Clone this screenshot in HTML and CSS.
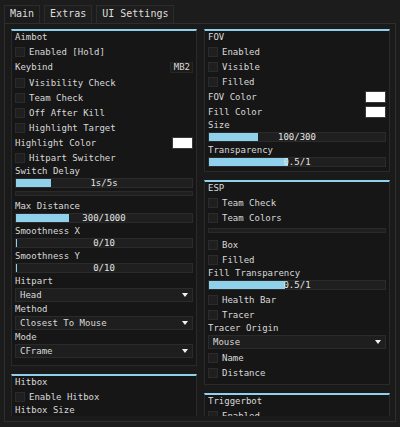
FILE: index.html
```html
<!DOCTYPE html>
<html>
<head>
<meta charset="utf-8">
<link rel="stylesheet" href="styles.css">
</head>
<body>
<div class="tabs">
  <div class="tab active">Main</div>
  <div class="tab">Extras</div>
  <div class="tab">UI Settings</div>
</div>
<div class="frame">
  <div class="col">
    <section class="box aimbot">
      <div class="title">Aimbot</div>
      <div class="check"><span class="cb"></span>Enabled [Hold]</div>
      <div class="row key-row"><span>Keybind</span><span class="key">MB2</span></div>
      <div class="check"><span class="cb"></span>Visibility Check</div>
      <div class="check"><span class="cb"></span>Team Check</div>
      <div class="check"><span class="cb"></span>Off After Kill</div>
      <div class="check"><span class="cb"></span>Highlight Target</div>
      <div class="row"><span>Highlight Color</span><span class="swatch"></span></div>
      <div class="check"><span class="cb"></span>Hitpart Switcher</div>
      <div class="label">Switch Delay</div>
      <div class="slider"><span class="fill" style="width:20%"></span><span class="val">1s/5s</span></div>
      <div class="strip"></div>
      <div class="label">Max Distance</div>
      <div class="slider"><span class="fill" style="width:30%"></span><span class="val">300/1000</span></div>
      <div class="label">Smoothness X</div>
      <div class="slider"><span class="fill" style="width:1px"></span><span class="val">0/10</span></div>
      <div class="label">Smoothness Y</div>
      <div class="slider"><span class="fill" style="width:1px"></span><span class="val">0/10</span></div>
      <div class="label">Hitpart</div>
      <div class="dd"><span>Head</span><span class="arrow"></span></div>
      <div class="label">Method</div>
      <div class="dd"><span>Closest To Mouse</span><span class="arrow"></span></div>
      <div class="label">Mode</div>
      <div class="dd"><span>CFrame</span><span class="arrow"></span></div>
    </section>
    <section class="box">
      <div class="title">Hitbox</div>
      <div class="check"><span class="cb"></span>Enable Hitbox</div>
      <div class="label">Hitbox Size</div>
    </section>
  </div>
  <div class="col">
    <section class="box">
      <div class="title">FOV</div>
      <div class="check"><span class="cb"></span>Enabled</div>
      <div class="check"><span class="cb"></span>Visible</div>
      <div class="check"><span class="cb"></span>Filled</div>
      <div class="row"><span>FOV Color</span><span class="swatch"></span></div>
      <div class="row"><span>Fill Color</span><span class="swatch"></span></div>
      <div class="label">Size</div>
      <div class="slider"><span class="fill" style="width:28%"></span><span class="val">100/300</span></div>
      <div class="label">Transparency</div>
      <div class="slider"><span class="fill" style="width:45%"></span><span class="val">0.5/1</span></div>
    </section>
    <section class="box">
      <div class="title">ESP</div>
      <div class="check"><span class="cb"></span>Team Check</div>
      <div class="check"><span class="cb"></span>Team Colors</div>
      <div class="strip"></div>
      <div class="check"><span class="cb"></span>Box</div>
      <div class="check"><span class="cb"></span>Filled</div>
      <div class="label">Fill Transparency</div>
      <div class="slider"><span class="fill" style="width:43%"></span><span class="val">0.5/1</span></div>
      <div class="check"><span class="cb"></span>Health Bar</div>
      <div class="check"><span class="cb"></span>Tracer</div>
      <div class="label">Tracer Origin</div>
      <div class="dd"><span>Mouse</span><span class="arrow"></span></div>
      <div class="check"><span class="cb"></span>Name</div>
      <div class="check"><span class="cb"></span>Distance</div>
    </section>
    <section class="box">
      <div class="title">Triggerbot</div>
      <div class="check"><span class="cb"></span>Enabled</div>
    </section>
  </div>
</div>
</body>
</html>
```
FILE: styles.css
```css
* { box-sizing: border-box; }
body {
  margin: 0;
  width: 400px;
  height: 427px;
  overflow: hidden;
  background: #1c1c1c;
  color: #d9d9d9;
  font-family: "DejaVu Sans Mono", "Liberation Mono", monospace;
  font-size: 9px;
}
.tabs {
  display: flex;
  gap: 4px;
  height: 23px;
  padding: 5px 0 0 4px;
}
.tab {
  height: 18px;
  padding: 0 5px;
  font-size: 10px;
  line-height: 16px;
  background: #1e1e1e;
  border: 1px solid #2c2c2c;
  border-bottom: none;
  color: #dedede;
}
.tab.active { background: #1b1b1b; }
.frame {
  margin: 0 4px 0 4px;
  height: 399px;
  border: 1px solid #2e2e2e;
  background: #1a1a1a;
  padding: 5px 5px 3px 6px;
  display: grid;
  grid-template-columns: 186px 186px;
  column-gap: 7px;
  align-items: start;
}
.col {
  display: flex;
  flex-direction: column;
  gap: 8px;
  height: 387px;
  overflow: hidden;
}
.box {
  flex: none;
  background: #161616;
  border: 1px solid #2a2a2a;
  border-top: 2px solid #8fd0ea;
  padding: 0 3px 4px 3px;
}
.box.aimbot { padding-bottom: 7px; }
.title { height: 13px; line-height: 13px; }
.label { height: 12px; line-height: 12px; }
.check {
  height: 15px;
  display: flex;
  align-items: center;
  gap: 4px;
}
.cb {
  width: 10px;
  height: 10px;
  background: #1f1f1f;
  border: 1px solid #2b2b2b;
}
.row {
  height: 15px;
  display: flex;
  align-items: center;
  justify-content: space-between;
}
.row.key-row { height: 16px; }
.key {
  height: 11px;
  line-height: 9px;
  padding: 0 2px 0 3px;
  background: #1b1b1b;
  border: 1px solid #262626;
}
.swatch {
  width: 21px;
  height: 12px;
  background: #ffffff;
  border: 1px solid #3a3a3a;
}
.slider {
  position: relative;
  height: 10px;
  margin: 1px 0 2px;
  background: #1f1f1f;
  border: 1px solid #2b2b2b;
  display: flex;
  align-items: center;
  justify-content: center;
}
.box > .slider:last-child { margin-bottom: 0; }
.fill {
  position: absolute;
  left: 0;
  top: 0;
  bottom: 0;
  background: #8fd0ea;
}
.val {
  position: relative;
  line-height: 8px;
  color: #e6e6e6;
}
.strip {
  height: 5px;
  margin: 3px 0 4px;
  background: #1f1f1f;
  border: 1px solid #2a2a2a;
}
.dd {
  height: 14px;
  margin: 1px 0;
  display: flex;
  align-items: center;
  justify-content: space-between;
  padding: 0 4px 0 4px;
  background: #1e1e1e;
  border: 1px solid #2b2b2b;
}
.box > .dd:last-child { margin-bottom: 0; }
.arrow {
  width: 0;
  height: 0;
  border-left: 3px solid transparent;
  border-right: 3px solid transparent;
  border-top: 4px solid #f2f2f2;
}
```
